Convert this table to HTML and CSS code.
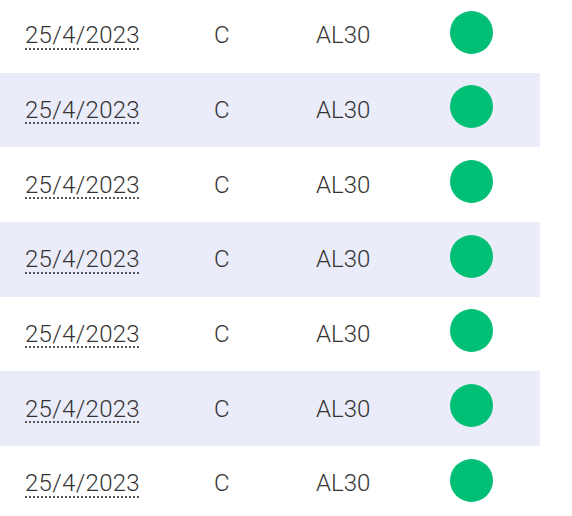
FILE: index.html
```html
<!DOCTYPE html>
<html lang="es">
<head>
    <meta charset="UTF-8">
    <meta name="viewport" content="width=device-width, initial-scale=1.0">
    <title>Operaciones</title>
    <link rel="stylesheet" href="styles.css">
</head>
<body>
    <div class="list">
        <div class="row">
            <abbr class="date" title="25 de abril de 2023">25/4/2023</abbr>
            <span class="type">C</span>
            <span class="ticker">AL30</span>
            <span class="status"></span>
        </div>
        <div class="row">
            <abbr class="date" title="25 de abril de 2023">25/4/2023</abbr>
            <span class="type">C</span>
            <span class="ticker">AL30</span>
            <span class="status"></span>
        </div>
        <div class="row">
            <abbr class="date" title="25 de abril de 2023">25/4/2023</abbr>
            <span class="type">C</span>
            <span class="ticker">AL30</span>
            <span class="status"></span>
        </div>
        <div class="row">
            <abbr class="date" title="25 de abril de 2023">25/4/2023</abbr>
            <span class="type">C</span>
            <span class="ticker">AL30</span>
            <span class="status"></span>
        </div>
        <div class="row">
            <abbr class="date" title="25 de abril de 2023">25/4/2023</abbr>
            <span class="type">C</span>
            <span class="ticker">AL30</span>
            <span class="status"></span>
        </div>
        <div class="row">
            <abbr class="date" title="25 de abril de 2023">25/4/2023</abbr>
            <span class="type">C</span>
            <span class="ticker">AL30</span>
            <span class="status"></span>
        </div>
        <div class="row">
            <abbr class="date" title="25 de abril de 2023">25/4/2023</abbr>
            <span class="type">C</span>
            <span class="ticker">AL30</span>
            <span class="status"></span>
        </div>
    </div>
</body>
</html>
```

FILE: styles.css
```css
body {
    margin: 0;
    background: #ffffff;
    font-family: Roboto, "Liberation Sans", sans-serif;
    font-weight: 300;
    color: #333333;
    overflow: hidden;
}
.list {
    width: 540px;
    margin-top: -2px;
}
.row {
    display: grid;
    grid-template-columns: 189px 102px 134px 43px;
    align-items: center;
    height: 74.66px;
    padding-left: 25px;
    box-sizing: border-box;
    font-size: 24px;
}
.row:nth-child(even) {
    background: #ebecfa;
}
.date {
    justify-self: start;
    letter-spacing: 0.3px;
    text-decoration: underline dotted 2px;
    text-underline-offset: 5px;
    text-decoration-color: #555;
}
.status {
    width: 43px;
    height: 43px;
    border-radius: 50%;
    background: #02bf76;
    margin-bottom: 6px;
}
```
